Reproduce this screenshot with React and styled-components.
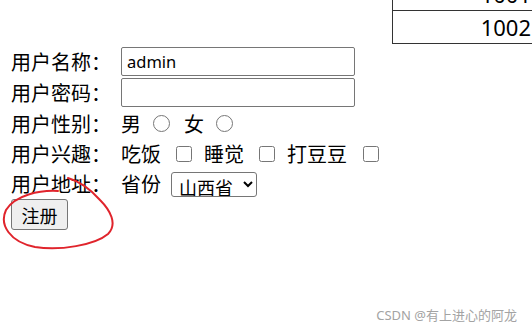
import React from "react";
import styled, { createGlobalStyle } from "styled-components";

const GlobalStyle = createGlobalStyle`
  html, body { margin: 0; padding: 0; background: #fff; overflow: hidden; }
  body { font-family: "Noto Sans", "Noto Sans CJK SC", sans-serif; color: #000; }
`;

const Page = styled.div`
  position: relative;
  width: 532px;
  height: 330px;
  overflow: hidden;
`;

const TableClip = styled.div`
  margin-left: 392px;
  width: 140px;
  height: 44px;
  overflow: hidden;
  display: flex;
  flex-direction: column;
  justify-content: flex-end;
`;

const Table = styled.table`
  border-collapse: collapse;
  width: 150px;
  font-size: 22px;
  font-family: "Noto Sans", sans-serif;
`;

const Cell = styled.td`
  border: 1px solid #333;
  height: 33px;
  padding: 0 10px 0 0;
  text-align: right;
  vertical-align: middle;
  line-height: 1;
  box-sizing: border-box;
`;

const Form = styled.form`
  margin-top: 2px;
  padding-left: 11px;
  display: flex;
  flex-direction: column;
  align-items: flex-start;
`;

const Row = styled.div`
  display: flex;
  align-items: center;
  height: ${(p) => p.$h || 30}px;
`;

const Label = styled.span`
  font-size: 20px;
  line-height: 1;
  width: 100px;
  margin-right: 10px;
  font-family: "Noto Sans CJK SC", sans-serif;
`;

const Text = styled.span`
  font-size: 20px;
  line-height: 1;
  font-family: "Noto Sans CJK SC", sans-serif;
  margin-left: ${(p) => p.$ml || 0}px;
`;

const TextInput = styled.input`
  width: 234px;
  height: 29px;
  box-sizing: border-box;
  border: 1px solid #767676;
  border-radius: 2px;
  padding: 0 5px;
  margin: 0;
  font-size: 16.5px;
  font-family: "Noto Sans", sans-serif;
  color: #000;
  background: #fff;
  outline: none;
`;

const Check = styled.input`
  width: ${(p) => p.$size || 16}px;
  height: ${(p) => p.$size || 16}px;
  margin: 0 0 0 ${(p) => p.$ml || 14}px;
`;

const Select = styled.select`
  width: 86px;
  height: 25px;
  margin-left: 10px;
  box-sizing: border-box;
  border: 1px solid #767676;
  border-radius: 3px;
  padding: 0 0 0 3px;
  font-size: 18px;
  font-family: "Noto Sans CJK SC", sans-serif;
  color: #000;
  background: #fff;
`;

const Button = styled.button`
  width: 57px;
  height: 31px;
  margin-top: 0;
  box-sizing: border-box;
  border: 1px solid #767676;
  border-radius: 3px;
  background: #efefef;
  font-size: 18px;
  font-family: "Noto Sans CJK SC", sans-serif;
  color: #000;
  padding: 0;
`;

const Annotation = styled.svg`
  position: absolute;
  left: 0;
  top: 0;
  pointer-events: none;
`;

const Watermark = styled.div`
  position: absolute;
  right: 15px;
  bottom: 6px;
  font-size: 13px;
  color: #a3a3a3;
  font-family: "Noto Sans", "Noto Sans CJK SC", sans-serif;
`;

export default function App() {
  return (
    <>
      <GlobalStyle />
      <Page>
        <TableClip>
          <Table>
            <tbody>
              <tr>
                <Cell>1001</Cell>
              </tr>
              <tr>
                <Cell>1002</Cell>
              </tr>
            </tbody>
          </Table>
        </TableClip>
        <Form onSubmit={(e) => e.preventDefault()}>
          <Row $h={31}>
            <Label>用户名称：</Label>
            <TextInput type="text" defaultValue="admin" />
          </Row>
          <Row $h={31}>
            <Label>用户密码：</Label>
            <TextInput type="password" />
          </Row>
          <Row $h={31}>
            <Label>用户性别：</Label>
            <Text>男</Text>
            <Check type="radio" name="sex" $ml={12} $size={17} />
            <Text $ml={14}>女</Text>
            <Check type="radio" name="sex" $ml={12} $size={17} />
          </Row>
          <Row>
            <Label>用户兴趣：</Label>
            <Text>吃饭</Text>
            <Check type="checkbox" $ml={15} />
            <Text $ml={12}>睡觉</Text>
            <Check type="checkbox" $ml={15} />
            <Text $ml={12}>打豆豆</Text>
            <Check type="checkbox" $ml={16} />
          </Row>
          <Row>
            <Label>用户地址：</Label>
            <Text>省份</Text>
            <Select defaultValue="sx">
              <option value="sx">山西省</option>
            </Select>
          </Row>
          <Button type="submit">注册</Button>
        </Form>
        <Annotation width="532" height="330" viewBox="0 0 532 330">
          <path
            d="M 58 191 C 40 190, 15 195, 6 210 C -1 225, 10 242, 35 247 C 60 251, 95 245, 108 234 C 118 224, 110 210, 100 200 C 92 191, 82 182, 68 178"
            fill="none"
            stroke="#e0242c"
            strokeWidth="2"
            strokeLinecap="round"
          />
        </Annotation>
        <Watermark>CSDN @有上进心的阿龙</Watermark>
      </Page>
    </>
  );
}
